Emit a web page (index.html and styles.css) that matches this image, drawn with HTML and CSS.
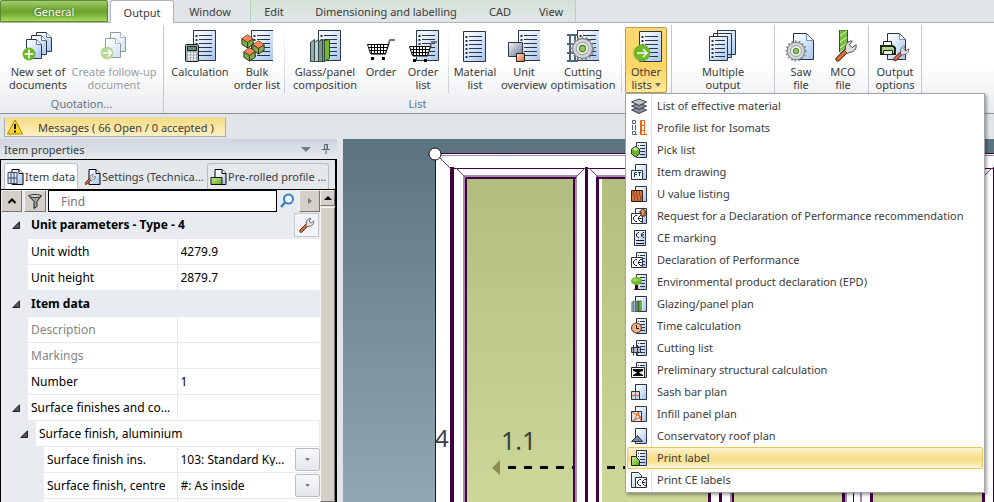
FILE: index.html
```html
<!DOCTYPE html>
<html lang="en">
<head>
<meta charset="utf-8">
<title>Output</title>
<link rel="stylesheet" href="styles.css">
</head>
<body>
<svg class="defs" aria-hidden="true">
  <defs>
    <linearGradient id="paper" x1="0" y1="0" x2="1" y2="1"><stop offset="0.2" stop-color="#f4f9ff"/><stop offset="1" stop-color="#a3c3f0"/></linearGradient>
    <linearGradient id="steel" x1="0" y1="0" x2="1" y2="1"><stop offset="0" stop-color="#f2f2f4"/><stop offset="1" stop-color="#6b7794"/></linearGradient>
    <linearGradient id="orange" x1="0" y1="0" x2="1" y2="1"><stop offset="0" stop-color="#ffe3d0"/><stop offset="1" stop-color="#f2611a"/></linearGradient>
    <linearGradient id="leaf" x1="0" y1="0" x2="1" y2="1"><stop offset="0" stop-color="#d4f0a4"/><stop offset="1" stop-color="#57a312"/></linearGradient>
    <linearGradient id="sky" x1="0" y1="0" x2="0" y2="1"><stop offset="0" stop-color="#5b7380"/><stop offset="1" stop-color="#91a7b4"/></linearGradient>
    <linearGradient id="glass" gradientUnits="userSpaceOnUse" x1="0" y1="36" x2="0" y2="363"><stop offset="0" stop-color="#b2bd80"/><stop offset="1" stop-color="#ccd799"/></linearGradient>
    <symbol id="list" viewBox="0 0 32 32">
      <path fill="url(#paper)" stroke="#2b3443" d="M9.500 .5h22v30h-22z"/>
      <path stroke="#2b3443" d="M15 5.500h13M15 9.500h13M15 13.500h13M15 17.500h13M15 21.500h13M15 25.500h13"/>
      <path stroke="#2b3443" stroke-width="2" stroke-dasharray="2 2" d="M12.500 5v22"/>
    </symbol>
    <symbol id="page" viewBox="0 0 32 32">
      <path fill="url(#paper)" stroke="#2b3443" d="M.5.5h10l5 5v14H.5z"/><path fill="#fff" stroke="#5d7ba5" d="M10.500 .5v5h5"/>
    </symbol>
    <symbol id="gear" viewBox="0 0 24 24">
      <circle cx="12" cy="12" r="9.500" fill="#d3d5d6" stroke="#777c80"/>
      <circle cx="12" cy="12" r="10.500" fill="none" stroke="#85898c" stroke-width="2" stroke-dasharray="2 2"/>
      <circle cx="12" cy="12" r="6" fill="#ececec" stroke="#9a9fa2"/>
      <circle cx="12" cy="12" r="3" fill="#8bd04d" stroke="#52743b"/>
    </symbol>
    <symbol id="wrench" viewBox="0 0 24 24">
      <path stroke="#27201d" stroke-width="5" stroke-linecap="round" d="M3 21 14 10"/>
      <path stroke="#f26a2b" stroke-width="3" stroke-linecap="round" d="M3 21 12 12"/>
      <path fill="#ddd" stroke="#3b3e43" d="M11 11c-1-5 2-9 7-9l-3 4 3 3 4-3c1 5-3 8-7 8l-2 1-3-3z"/>
    </symbol>
    <symbol id="cart" viewBox="0 0 32 32">
      <path fill="none" stroke="#777" stroke-width="2" d="M30 10h-5l-5 14H6"/>
      <path fill="#fff" stroke="#000" d="M2.500 14.500h21l-3 9h-15z"/>
      <path fill="none" stroke="#000" d="M3 17.500h19M4 20.500h17M6.500 15v8M9.500 15v8M12.500 15v8M15.500 15v8M18.500 15v8"/>
      <path d="M6 27h3v3H6zM17 27h3v3h-3z"/>
    </symbol>
    <symbol id="panes" viewBox="0 0 32 32">
      <g stroke="#354538"><path fill="#94a9b5" d="M1.500 12.500l4-3v22h-4z"/><path fill="#b5d5e7" d="M5.500 12.500l4-3v22h-4z"/><path fill="#77979d" d="M9.500 11.500l4-2v22h-4z"/><path fill="#72b930" d="M13.500 10.500l2-1v22h-2zM15.500 10.500l5-1v19l-5 3z"/></g>
    </symbol>
    <symbol id="cube" viewBox="0 0 16 16">
      <path fill="#7fae42" stroke="#222" d="M2 5l6-4 6 4v6l-6 4-6-4z"/><path fill="#ff8657" d="M2 5l6-4 6 4-6 4z"/><path fill="none" stroke="#3a2b16" d="M2 5l6 4 6-4M8 9v6"/>
    </symbol>
    <symbol id="s-list" viewBox="0 0 16 16">
      <path fill="url(#paper)" stroke="#2b3443" d="M5.500 .5h10v15h-10z"/><path stroke="#2b3443" d="M9 3.500h5M9 6.500h5M9 9.500h5M9 12.500h5M7 3.500h1M7 6.500h1"/>
    </symbol>
    <symbol id="s-page" viewBox="0 0 16 16"><path fill="url(#paper)" stroke="#2b3443" d="M4.500 .5h11v15h-11z"/></symbol>
    <symbol id="s-ce" viewBox="0 0 16 16">
      <path fill="#fff" stroke="#2b3443" d="M.5 5.500h11v10H.5z"/><path fill="none" stroke="#111" d="M6 7.500H4.500l-2 2v2l2 2H6M11 7.500H9.500l-2 2v2l2 2H11M8 10.500h2.500"/>
    </symbol>
    <symbol id="s-doc" viewBox="0 0 16 16"><path fill="url(#paper)" stroke="#000" d="M3.500 .5h7l4 4v11h-11z"/><path fill="#fff" stroke="#000" d="M10.500 .5v4h4"/></symbol>
    <symbol id="caret" viewBox="0 0 8 8"><path fill="#555" stroke="#222" d="M7.500 .8v6.700H.8z"/></symbol>
  </defs>
</svg>

<header class="ribbon">
  <nav class="tabs" aria-label="Ribbon tabs">
    <button class="tab tab-general">General</button>
    <button class="tab tab-active">Output</button>
    <button class="tab">Window</button>
    <div class="context-tabs">
      <button class="tab">Edit</button>
      <button class="tab">Dimensioning and labelling</button>
      <button class="tab">CAD</button>
      <button class="tab">View</button>
    </div>
  </nav>

  <div class="groups">
    <section class="group">
      <div class="tools tools-quotation">
        <button class="tool">
          <svg viewBox="0 0 32 32"><use href="#page" x="14" y="2" width="32" height="32"/><use href="#page" x="9" y="5" width="32" height="32"/><use href="#page" x="4" y="9" width="32" height="32"/><circle cx="7" cy="24" r="6.500" fill="#6eb52b"/><path stroke="#fff" stroke-width="1.500" d="M2.500 24h9M7 19.500v9"/></svg>
          <span>New set of<br>documents</span>
        </button>
        <button class="tool" disabled>
          <svg viewBox="0 0 32 32"><use href="#page" x="12" y="2" width="32" height="32"/><use href="#page" x="7" y="8" width="32" height="32"/><circle cx="9" cy="23" r="6.500" fill="#6eb52b"/><path fill="none" stroke="#fff" stroke-width="1.500" d="M4.500 23h9M10 19.500l3.500 3.500-3.500 3.500"/></svg>
          <span>Create follow-up<br>document</span>
        </button>
      </div>
      <h2>Quotation...</h2>
    </section>

    <section class="group">
      <div class="tools tools-list">
        <button class="tool">
          <svg viewBox="0 0 32 32"><use href="#list" width="32" height="32"/><rect x="1.500" y="14.500" width="13" height="17" rx="1" fill="#a5a9b0" stroke="#15181d"/><path fill="#5c8f7b" stroke="#222" d="M3.500 16.500h9v4h-9z"/><path stroke="#fff" stroke-width="2" stroke-dasharray="2 1" d="M4 23.500h8M4 26.500h8M4 29.500h8"/></svg>
          <span>Calculation</span>
        </button>
        <button class="tool">
          <svg viewBox="0 0 32 32"><use href="#list" x="1" width="32" height="32"/><use href="#cube" x="-1" y="4" width="15" height="15"/><use href="#cube" x="10" y="10" width="15" height="15"/><use href="#cube" x="1" y="17" width="15" height="15"/></svg>
          <span>Bulk<br>order list</span>
        </button>
        <i class="rule"></i>
        <button class="tool">
          <svg viewBox="0 0 32 32"><use href="#list" width="32" height="32"/><use href="#panes" width="32" height="32"/></svg>
          <span>Glass/panel<br>composition</span>
        </button>
        <button class="tool">
          <svg viewBox="0 0 32 32"><use href="#cart" width="32" height="32"/></svg>
          <span>Order</span>
        </button>
        <button class="tool">
          <svg viewBox="0 0 32 32"><use href="#list" width="32" height="32"/><use href="#cart" y="2" width="32" height="32"/></svg>
          <span>Order<br>list</span>
        </button>
        <i class="rule"></i>
        <button class="tool">
          <svg viewBox="0 0 32 32"><use href="#list" x="-5" y="1" width="32" height="32"/></svg>
          <span>Material<br>list</span>
        </button>
        <button class="tool">
          <svg viewBox="0 0 32 32"><use href="#list" x="1" width="32" height="32"/><path fill="url(#steel)" stroke="#2b3443" d="M.5 12.500h14v14H.5z"/><path fill="url(#orange)" stroke="#222" d="M8.500 23.500h8v8h-8z"/></svg>
          <span>Unit<br>overview</span>
        </button>
        <button class="tool">
          <svg viewBox="0 0 32 32"><use href="#list" x="1" width="32" height="32"/><path fill="none" stroke="#4b6482" stroke-width="2" d="M3 4v28M8 4v28M0 5h11M0 14h11M0 23h11M0 31h11"/><use href="#gear" x="3" y="6" width="25" height="25"/></svg>
          <span>Cutting<br>optimisation</span>
        </button>
        <i class="rule"></i>
        <div class="dropdown">
          <button class="tool tool-open" aria-expanded="true">
            <svg viewBox="0 0 32 32"><use href="#list" y="1" width="32" height="32"/><circle cx="12" cy="23" r="8.500" fill="#6fb629"/><path fill="none" stroke="#fff" stroke-width="1.500" d="M7 23h10M13 19l4 4-4 4"/></svg>
            <span>Other<br>lists <svg class="tiny" viewBox="0 0 6 4"><path fill="#716a5e" d="M0 0h6L3 4z"/></svg></span>
          </button>
          <div class="menu">
            <button><svg viewBox="0 0 16 16"><g fill="#8b9096" stroke="#3a3f45"><path d="M.5 12l7.500-3 7.500 3L8 15.500z"/><path d="M.5 8l7.500-3 7.500 3L8 11.500z"/><path fill="#bfc4c8" d="M.5 4L8 1l7.500 3L8 7.500z"/></g></svg><span>List of effective material</span></button>
            <button><svg viewBox="0 0 16 16"><path fill="none" stroke="#4b6482" d="M1.500 .5h3v3h-3zM1.500 5v5M4.500 5v5M1.500 11.500h3v3M1.500 11.500v3H6"/><path fill="none" stroke="#f0640e" d="M9.500 .5h4v14h-4zM9.500 5.500h4M9.500 10.500h4M13 14.500h3M10.500 1v13"/></svg><span>Profile list for Isomats</span></button>
            <button><svg viewBox="0 0 16 16"><use href="#s-list" width="16" height="16"/><path fill="#6fb22d" stroke="#234112" d="M.5 7l4-2.500 4 2.500v5l-4 3-4-3z"/><path fill="#c9eaa0" d="M1.500 7l3-2 3 2-3 2z"/></svg><span>Pick list</span></button>
            <button><svg viewBox="0 0 16 16"><use href="#s-page" width="16" height="16"/><path fill="#eef6ff" stroke="#2b3443" d="M.5 6.500h11v9H.5z"/><path fill="none" stroke="#2b3443" d="M3.500 13V8.500H6M3 10.500h3M7 8.500h3M8.500 9v3"/></svg><span>Item drawing</span></button>
            <button><svg viewBox="0 0 16 16"><use href="#s-page" width="16" height="16"/><path fill="#d57543" stroke="#3b1d0c" d="M.5 4.500h11v11H.5z"/><path fill="none" stroke="#873a14" d="M3 5l-1 3 2 3-1 4M6 5L5 8l2 3-1 4M9 5L8 8l2 3-1 4"/></svg><span>U value listing</span></button>
            <button><svg viewBox="0 0 16 16"><use href="#s-page" width="16" height="16"/><use href="#s-ce" width="16" height="16"/><path fill="#f58a4c" stroke="#222" d="M12 .5L15.500 4H14v4h-4V4H8.500z"/></svg><span>Request for a Declaration of Performance recommendation</span></button>
            <button><svg viewBox="0 0 16 16"><path fill="url(#paper)" stroke="#2b3443" d="M3.500 .5h11v15h-11z"/><path fill="none" stroke="#111" d="M8 2.500H7l-1.500 1.500v2L7 7.500h1M13 2.500h-1L10.500 4v2L12 7.500h1M11 5h2M5 10.500h8M5 13.500h8"/></svg><span>CE marking</span></button>
            <button><svg viewBox="0 0 16 16"><use href="#s-list" width="16" height="16"/><use href="#s-ce" width="16" height="16"/></svg><span>Declaration of Performance</span></button>
            <button><svg viewBox="0 0 16 16"><use href="#s-list" width="16" height="16"/><path fill="#340b0b" d="M4 10h3v4l1 2H3l1-2z"/><ellipse cx="5.500" cy="7" rx="5.500" ry="4" fill="#6fbb2d"/><ellipse cx="4.500" cy="6" rx="3" ry="1.500" fill="#a0d95f"/></svg><span>Environmental product declaration (EPD)</span></button>
            <button><svg viewBox="0 0 16 16"><use href="#s-page" width="16" height="16"/><use href="#panes" width="16" height="16"/></svg><span>Glazing/panel plan</span></button>
            <button><svg viewBox="0 0 16 16"><use href="#s-list" width="16" height="16"/><circle cx="5.500" cy="10" r="5" fill="#f2b287" stroke="#4c2c1d"/><path fill="none" stroke="#26140b" d="M5.500 7v3.500H8"/></svg><span>Time calculation</span></button>
            <button><svg viewBox="0 0 16 16"><use href="#s-list" width="16" height="16"/><path fill="#b7bcc5" stroke="#2b3443" d="M.5 7.500h9v5h-9zM2.500 5v10.500M6.500 5v10.500"/></svg><span>Cutting list</span></button>
            <button><svg viewBox="0 0 16 16"><use href="#s-list" width="16" height="16"/><path fill="#fff" stroke="#222" d="M.5 5.500h13v10H.5z"/><path d="M2 7h10v2L8 10.500l4 2.500v1H2v-1l4-2.500L2 9z"/></svg><span>Preliminary structural calculation</span></button>
            <button><svg viewBox="0 0 16 16"><use href="#s-page" width="16" height="16"/><path fill="#cbd6e3" stroke="#2b3443" d="M.5 7.500h8v8h-8z"/><path stroke="#f0640e" d="M4.500 8v7M1 11.500h7"/></svg><span>Sash bar plan</span></button>
            <button><svg viewBox="0 0 16 16"><use href="#s-page" width="16" height="16"/><path fill="#dce8f4" stroke="#2b3443" d="M.5 5.500h10v10H.5z"/><path fill="none" stroke="#f0640e" d="M1 6l9 5-9 4M3 15l4-9 3 9"/></svg><span>Infill panel plan</span></button>
            <button><svg viewBox="0 0 16 16"><use href="#s-page" width="16" height="16"/><path fill="#7c8796" stroke="#2b3443" d="M.5 13.500l6-6 5 6z"/></svg><span>Conservatory roof plan</span></button>
            <button class="hot"><svg viewBox="0 0 16 16"><use href="#s-list" width="16" height="16"/><path fill="url(#leaf)" stroke="#16240b" d="M.5 6.500h4l4 4v5h-8z"/></svg><span>Print label</span></button>
            <button><svg viewBox="0 0 16 16"><path fill="url(#paper)" stroke="#2b3443" d="M.5 .5h7l3 3v12H.5z"/><use href="#s-ce" x="4" width="16" height="16"/></svg><span>Print CE labels</span></button>
          </div>
        </div>
      </div>
      <h2>List</h2>
    </section>

    <section class="group">
      <div class="tools tools-multiple">
        <button class="tool">
          <svg viewBox="0 0 32 32"><g fill="url(#paper)" stroke="#2b3443"><path d="M10.500 .5h18v24h-18zM6.500 3.500h18v24h-18z"/><path d="M2.500 6.500h18v24h-18z"/></g><path stroke="#2b3443" d="M8 10.500h10M8 14.500h10M8 18.500h10M8 22.500h10M8 26.500h10"/><path stroke="#2b3443" stroke-width="2" stroke-dasharray="2 2" d="M5.500 10v18"/></svg>
          <span>Multiple<br>output</span>
        </button>
      </div>
    </section>
    <section class="group">
      <div class="tools tools-files">
        <button class="tool">
          <svg viewBox="0 0 32 32"><path fill="url(#paper)" stroke="#2b3443" d="M8.500 3.500h13l7 7v19h-20z"/><path fill="#fff" stroke="#7094c9" d="M21.500 4v6.500H28"/><use href="#gear" x="0" y="10" width="22" height="22"/></svg>
          <span>Saw<br>file</span>
        </button>
        <button class="tool">
          <svg viewBox="0 0 32 32"><path fill="#79bd3d" stroke="#2f5a17" d="M12.500 0h8v22h-8z"/><path stroke="#e1f3cd" d="M13 6l7-5M13 12l7-5M13 18l7-5M13 22l7-4"/><use href="#wrench" x="8" y="9" width="23" height="23"/></svg>
          <span>MCO<br>file</span>
        </button>
      </div>
    </section>
    <section class="group">
      <div class="tools tools-options">
        <button class="tool">
          <svg viewBox="0 0 32 32"><path fill="url(#paper)" stroke="#2b3443" d="M8.500 3.500h12l6 6v20h-18z"/><path fill="#fff" stroke="#7094c9" d="M20.500 4v5.500H26"/><path fill="#fff" stroke="#222" d="M4.500 11.500h8v5h-8z"/><path fill="#a9d488" stroke="#1e2a18" stroke-width="2" d="M2 16h12l2 2v6H2z"/><path fill="#e9f6da" stroke="#222" d="M4.500 20.500h9v4h-9z"/><use href="#wrench" x="14" y="14" width="17" height="18"/></svg>
          <span>Output<br>options</span>
        </button>
      </div>
    </section>
  </div>
</header>

<div class="message-strip">
  <button class="messages">
    <svg viewBox="0 0 16 16"><path fill="#ffd42a" stroke="#a98508" stroke-linejoin="round" d="M8 1l7.500 14H.5z"/><path fill="none" stroke="#111" stroke-width="2" d="M8 5v5M8 11.500v2"/></svg>
    Messages ( 66 Open / 0 accepted )
  </button>
</div>

<main class="workspace">
  <aside class="panel">
    <div class="panel-title">
      <h1>Item properties</h1>
      <svg class="drop" viewBox="0 0 10 5"><path fill="#717b86" d="M0 0h10L5 5z"/></svg>
      <svg class="pin" viewBox="0 0 8 10"><path fill="none" stroke="#5f6975" d="M2.500 .5h3v5h-3zM5 0v6M0 5.500h8M4 6v4"/></svg>
    </div>
    <div class="panel-body">
      <div class="panel-tabs">
        <button class="ptab ptab-on"><svg viewBox="0 0 16 16"><use href="#s-doc" x="1" width="16" height="16"/><path fill="#d9e6f5" stroke="#344a68" d="M.5 3.500h9v11h-9zM.5 9h9M3.500 3.500v11M6.500 3.500v11"/></svg><span>Item data</span></button>
        <button class="ptab"><svg viewBox="0 0 16 16"><use href="#s-doc" x="1" width="16" height="16"/><use href="#wrench" x="0" y="4" width="12" height="12"/></svg><span>Settings (Technica...</span></button>
        <button class="ptab ptab-box"><svg viewBox="0 0 16 16"><use href="#s-doc" x="1" width="16" height="16"/><path fill="url(#leaf)" stroke="#111" d="M.5 8.500h11v7H.5z"/></svg><span>Pre-rolled profile ...</span></button>
      </div>
      <div class="panel-content">
        <div class="grid-side">
          <div class="find-row">
            <button class="mini" aria-label="Collapse"><svg viewBox="0 0 10 10"><path fill="none" stroke="#000" stroke-width="2" d="M1.500 7L5 3.500 8.500 7"/></svg></button>
            <button class="mini" aria-label="Filter"><svg viewBox="0 0 16 16"><path fill="#9a9c9e" stroke="#222" d="M1.500 2.500h13L10 8.500v5l-3 2v-7z"/><ellipse cx="8" cy="3" rx="6" ry="1.500" fill="#d9d9d9" stroke="#333"/></svg></button>
            <input class="find" type="text" placeholder="Find" aria-label="Find">
            <svg class="lens" viewBox="0 0 16 16"><circle cx="9.500" cy="6" r="4.500" fill="#f5faff" stroke="#3c7fc4" stroke-width="2"/><path stroke="#3c7fc4" stroke-width="2.500" d="M6 9.500L2 14"/></svg>
            <button class="mini" aria-label="Next"><svg viewBox="0 0 10 10"><path fill="#777" d="M3 2l4 3-4 3z"/></svg></button>
          </div>
          <table class="props">
            <colgroup><col class="col-name"><col></colgroup>
            <tbody>
              <tr class="head"><th colspan="2"><div class="cell"><i class="gut"><svg><use href="#caret"/></svg></i><span>Unit parameters - Type - 4</span><button class="tool-btn" aria-label="Tools"><svg viewBox="0 0 16 16"><use href="#wrench" width="16" height="16"/></svg></button></div></th></tr>
              <tr><th><div class="cell"><i class="gut"></i><label for="uw">Unit width</label></div></th><td><input id="uw" value="4279.9"></td></tr>
              <tr><th><div class="cell"><i class="gut"></i><label for="uh">Unit height</label></div></th><td><input id="uh" value="2879.7"></td></tr>
              <tr class="head"><th colspan="2"><div class="cell"><i class="gut"><svg><use href="#caret"/></svg></i><span>Item data</span></div></th></tr>
              <tr class="dim"><th><div class="cell"><i class="gut"></i><label for="de">Description</label></div></th><td><input id="de" value=""></td></tr>
              <tr class="dim"><th><div class="cell"><i class="gut"></i><label for="ma">Markings</label></div></th><td><input id="ma" value=""></td></tr>
              <tr><th><div class="cell"><i class="gut"></i><label for="nu">Number</label></div></th><td><input id="nu" value="1"></td></tr>
              <tr><th><div class="cell"><i class="gut"><svg><use href="#caret"/></svg></i><span>Surface finishes and co...</span></div></th><td></td></tr>
              <tr><th colspan="2"><div class="cell"><i class="gut gut-2"><svg><use href="#caret"/></svg></i><span>Surface finish, aluminium</span></div></th></tr>
              <tr><th><div class="cell"><i class="gut gut-3"></i><label for="fi">Surface finish ins.</label></div></th><td><div class="pick"><select id="fi"><option>103: Standard Ky...</option></select><svg viewBox="0 0 6 3"><path fill="#666" d="M0 0h6L3 3z"/></svg></div></td></tr>
              <tr><th><div class="cell"><i class="gut gut-3"></i><label for="fc">Surface finish, centre</label></div></th><td><div class="pick"><select id="fc"><option>#: As inside</option></select><svg viewBox="0 0 6 3"><path fill="#666" d="M0 0h6L3 3z"/></svg></div></td></tr>
              <tr><th><div class="cell"><i class="gut gut-3"></i></div></th><td></td></tr>
            </tbody>
          </table>
        </div>
        <div class="scroll">
          <button class="scroll-up" aria-label="Scroll up"><svg viewBox="0 0 8 4"><path d="M0 4h8L4 0z"/></svg></button>
          <div class="thumb"></div>
        </div>
      </div>
    </div>
  </aside>

  <section class="canvas">
    <svg width="100%" height="100%" role="img" aria-label="Unit elevation">
      <rect width="100%" height="100%" fill="url(#sky)"/>
      <rect x="92" y="14" width="1200" height="600" fill="#fff"/>
      <g fill="url(#glass)">
        <rect x="122" y="39" width="108" height="400"/><rect x="259" y="39" width="106" height="400"/><rect x="391" y="39" width="108" height="400"/><rect x="530" y="39" width="109" height="400"/>
      </g>
      <g fill="#a98aad">
        <path d="M92 16h600v1H92zM120 36h114v2H120zM253 36h116v2H253zM120 36h2v400h-2zM232 36h2v400h-2zM387 36h2v400h-2zM502 36h2v400h-2zM517 36h2v400h-2z"/>
      </g>
      <g fill="#400043">
        <path d="M92 14h600v1H92zM92 14h1v400h-1zM107 29h600v1H107zM107 28h4v400h-4zM242 28h3v400h-3zM376 28h3v400h-3zM510 28h1v400h-1zM650 28h1v400h-1z"/>
        <path d="M122 38h111v2H122zM256 38h110v2H256zM389 38h112v2H389zM527 38h115v2H527zM122 38h2v400h-2zM230 38h2v400h-2zM253 38h3v400h-3zM365 38h3v400h-3zM389 38h2v400h-2zM499 38h3v400h-3zM527 38h3v400h-3zM639 38h3v400h-3z"/>
      </g>
      <path fill="none" stroke="#6c3b70" d="M96 18l12 12M113 29l10 10M242 29l-9 9M246 29l9 9M639 39l10-10"/>
      <circle cx="92" cy="15" r="6" fill="#fff" stroke="#111"/>
      <g class="dims"><text x="92" y="308">4</text><text x="158" y="311" class="big">1.1</text></g>
      <path fill="#8c8d4b" d="M149 329l8-8v15z"/>
      <path stroke="#000" stroke-width="3" stroke-dasharray="8 8" d="M165 328.500h65M264 328.500h100"/>
    </svg>
  </section>
</main>
</body>
</html>
```
FILE: styles.css
```css
* { box-sizing: border-box; }

body {
  margin: 0;
  height: 100vh;
  display: flex;
  flex-direction: column;
  overflow: hidden;
  background: #e1e5e8;
  color: #3b3b3b;
  font: 11px/13px "Noto Sans", "Open Sans", sans-serif;
}

button, input, select {
  font: inherit;
  color: inherit;
  border: 0;
  padding: 0;
  margin: 0;
  background: none;
  border-radius: 0;
}

h1, h2 { margin: 0; font: inherit; }
svg { display: block; flex: none; }
.defs { position: absolute; width: 0; height: 0; }

/* Ribbon tabs */
.tabs {
  display: grid;
  grid-template-columns: 108px 64px 76px 326px;
  height: 23px;
  border-bottom: 1px solid #aeb4ba;
}

.tabs > .tab-active { margin-bottom: -1px; margin-left: 2px; margin-right: -2px; }
.tab { white-space: nowrap; padding-top: 1px; }

.tab-general {
  padding-top: 0;
  color: #fff;
  text-shadow: 0 0 2px #33520f;
  border: 1px solid #5c8b2c;
  border-radius: 2px 2px 0 0;
  background: linear-gradient(#a5cb72, #6fa630 45%, #6fa630 60%, #a8dc5d);
}

.tab-active {
  padding-top: 0;
  background: #fff;
  border: 1px solid #aeb4ba;
  border-bottom: 0;
  border-radius: 3px 3px 0 0;
}

.context-tabs {
  display: grid;
  grid-template-columns: 46px 178px 50px 52px;
  margin: 0 -2px 0 2px;
  border: 1px solid #b6d4b4;
  border-width: 0 1px;
  background: linear-gradient(#d3e2d5, #e1e5e8);
}

/* Ribbon groups */
.groups {
  display: flex;
  height: 91px;
  border-bottom: 1px solid #8b9197;
  background: linear-gradient(#fff 45%, #e8ebee);
}

.group {
  display: flex;
  flex-direction: column;
  justify-content: space-between;
  margin-top: 2px;
  padding-top: 2px;
  border-right: 1px solid #c5c9ce;
}

.group h2 { text-align: center; color: #69717b; padding-bottom: 3px; }
.tools { display: grid; height: 66px; }
.tools-quotation { grid-template-columns: 76px 76px; padding-right: 11px; }
.tools-list { grid-template-columns: 68px 46px 8px 74px 38px 46px 4px 50px 48px 70px 7px 42px; padding: 0 4px 0 2px; }
.tools-multiple { grid-template-columns: 102px; }
.tools-files { grid-template-columns: 42px 42px; padding: 0 4px 0 5px; }
.tools-options { grid-template-columns: 52px; }

.tool {
  display: flex;
  flex-direction: column;
  align-items: center;
  gap: 3px;
  padding-top: 3px;
  white-space: nowrap;
  border-radius: 2px;
}

.tool > svg { width: 32px; height: 32px; }
.tool > span { display: flow-root; }
.tool:disabled { color: #9c9fa3; }
.tool:disabled > svg { opacity: 0.5; }
.rule { justify-self: center; width: 1px; background: linear-gradient(transparent, #ccd0d4); }
.dropdown { position: relative; display: grid; z-index: 2; }

.tool-open {
  padding-top: 2px;
  border: 1px solid #c19a42;
  background: linear-gradient(#fbd873, #fdd566 60%, #ffe99a);
}

.tiny { display: inline-block; width: 6px; height: 4px; vertical-align: 2px; }

/* Drop-down menu */
.menu {
  position: absolute;
  top: 100%;
  left: 0;
  width: 360px;
  padding: 1px;
  border: 1px solid #a1a5aa;
  background: linear-gradient(90deg, #fff 25px, #e2e3e5 25px, #e2e3e5 26px, #fff 26px);
  box-shadow: 2px 2px 3px #0005;
}

.menu button {
  display: flex;
  align-items: center;
  gap: 10px;
  width: 100%;
  height: 22px;
  padding: 0 0 1px 3px;
  border: 1px solid transparent;
  border-radius: 2px;
  white-space: nowrap;
}

.menu svg { width: 16px; height: 16px; }

.menu .hot {
  border-color: #ecc85c;
  background: linear-gradient(#fdf3d2, #f8e08e 45%, #f8e08e 65%, #fef6dc);
}

/* Messages */
.message-strip { padding: 3px 4px; height: 25px; }

.messages {
  display: flex;
  align-items: center;
  gap: 15px;
  width: 222px;
  height: 20px;
  padding-left: 2px;
  border: 1px solid #a9adb2;
  border-top-color: #e8ddb5;
  background: linear-gradient(#f5dc82, #fcf0c4);
  white-space: nowrap;
}

.messages svg { width: 16px; height: 16px; }

/* Item properties */
.workspace { display: flex; flex: 1; min-height: 0; }
.panel { display: flex; flex-direction: column; width: 337px; margin-right: 6px; flex: none; }

.panel-title {
  display: flex;
  align-items: center;
  height: 20px;
  padding: 0 7px 0 4px;
  background: linear-gradient(#cdd5dd, #e6eaee);
}

.panel-title h1 { flex: 1; }
.drop { width: 10px; height: 5px; margin-right: 11px; }
.pin { width: 8px; height: 10px; }

.panel-body {
  flex: 1;
  min-height: 0;
  display: flex;
  flex-direction: column;
  border: solid #000;
  border-width: 1px 2px 0 1px;
}

.panel-tabs {
  display: grid;
  grid-template-columns: 74px 127px 122px;
  column-gap: 1px;
  height: 30px;
  padding: 3px 3px 0;
  border-bottom: 1px solid #000;
  background: #e4e8eb;
}

.ptab {
  display: flex;
  align-items: center;
  gap: 1px;
  padding: 0 2px;
  border: 1px solid transparent;
  border-bottom: 0;
  border-radius: 3px 3px 0 0;
  white-space: nowrap;
}

.ptab svg { width: 17px; height: 16px; }
.ptab:not(.ptab-on) { padding-left: 4px; }
.ptab.ptab-box { border-color: #b8bdc3; padding-left: 2px; }
.ptab-on { background: #fff; border-color: #b8bdc3; }

.panel-content { display: flex; flex: 1; min-height: 0; }
.grid-side { flex: 1; min-width: 0; overflow: hidden; background: #e8ebf0; }

.find-row {
  display: grid;
  grid-template-columns: 21px 22px 1fr 18px 21px;
  gap: 2px;
  height: 22px;
  align-items: stretch;
}

.mini {
  display: grid;
  place-items: center;
  border: 1px solid;
  border-color: #f5f3ef #77746f #77746f #f5f3ef;
  background: #d4d0c8;
}

.mini svg { width: 10px; height: 10px; }
.mini:nth-child(2) svg { width: 16px; height: 16px; }
.lens { width: 16px; height: 16px; align-self: center; }

.find {
  min-width: 0;
  padding: 0 12px;
  border: 1px solid #000;
  background: #fff;
  font-size: 12px;
}

.find::placeholder { color: #777; opacity: 1; }

.props {
  width: 100%;
  table-layout: fixed;
  border-collapse: collapse;
  color: #000;
  background: #fff;
  font-size: 12px;
}

.col-name { width: 176px; }
.props th, .props td { height: 26px; padding: 0; font-weight: 400; text-align: left; white-space: nowrap; border-bottom: 1px solid #e6e9ee; }
.props th { border-right: 1px solid #e6e9ee; }
.props td input { width: 100%; padding: 0 3px; }
.props .dim { color: #858585; }
.props .head th { background: #e8ebf0; font-weight: 700; }
.cell { display: flex; align-items: center; height: 25px; gap: 3px; }
.cell span { flex: 1; }

.gut {
  display: flex;
  align-items: center;
  justify-content: flex-end;
  align-self: stretch;
  width: 27px;
  padding-right: 8px;
  margin-bottom: -1px;
  background: #e8ebf0;
}

.gut svg { width: 8px; height: 8px; }
.gut-2 { width: 35px; }
.gut-3 { width: 43px; }

.tool-btn {
  display: grid;
  place-items: center;
  width: 25px;
  height: 24px;
  border: 1px solid #c4c9d0;
  background: #f4f5f8;
}

.tool-btn svg { width: 16px; height: 16px; }

.pick { display: grid; grid-template-columns: 1fr 25px; align-items: center; height: 25px; }
.pick select { min-width: 0; appearance: none; padding-left: 3px; }

.pick svg {
  width: 25px;
  height: 23px;
  padding: 9px;
  border: 1px solid #b9bec5;
  border-radius: 2px;
  background: linear-gradient(#f7f8fa, #e3e6ea);
}

.scroll { display: flex; flex-direction: column; gap: 1px; width: 15px; flex: none; background: #ece9e4; }

.scroll-up, .thumb {
  border: 1px solid;
  border-color: #f5f3ef #77746f #77746f #f5f3ef;
  background: #d4d0c8;
}

.scroll-up { display: grid; place-items: center; height: 16px; }
.scroll-up svg { width: 8px; height: 4px; }
.thumb { flex: 1; }

/* Drawing */
.canvas { flex: 1; min-width: 0; overflow: hidden; }
.dims { fill: #404040; font-size: 24px; }
.dims .big { font-size: 25px; }
```
